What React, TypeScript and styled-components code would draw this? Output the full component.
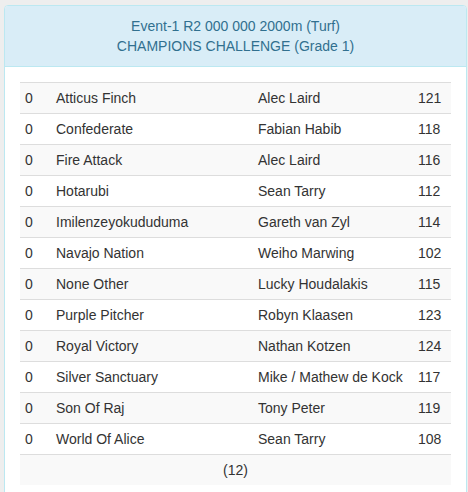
import React from "react";
import styled, { createGlobalStyle } from "styled-components";

const Global = createGlobalStyle`
  html, body { margin: 0; padding: 0; background: #eeeeee; }
  body {
    font-family: "Liberation Sans", Arial, Helvetica, sans-serif;
    font-size: 14px;
    line-height: 20px;
    color: #333333;
  }
  * { box-sizing: border-box; }
`;

const Page = styled.div`
  padding: 5px 1px 0 4px;
`;

const Panel = styled.div`
  background: #ffffff;
  border: 1px solid #bce8f1;
  border-radius: 4px;
`;

const Heading = styled.div`
  background: #d9edf7;
  color: #31708f;
  border-bottom: 1px solid #bce8f1;
  border-top-left-radius: 3px;
  border-top-right-radius: 3px;
  padding: 10px 15px;
  text-align: center;
`;

const Body = styled.div`
  padding: 15px;
`;

const Table = styled.table`
  width: 100%;
  border-collapse: collapse;
  border-spacing: 0;
  table-layout: fixed;
`;

const Row = styled.tr<{ $striped: boolean }>`
  background: ${(p) => (p.$striped ? "#f9f9f9" : "transparent")};
`;

const Cell = styled.td<{ $center?: boolean }>`
  padding: 5px;
  line-height: 20px;
  border-top: 1px solid #dddddd;
  vertical-align: top;
  white-space: nowrap;
  text-align: ${(p) => (p.$center ? "center" : "left")};
`;

const runners: [string, string, string, number][] = [
  ["0", "Atticus Finch", "Alec Laird", 121],
  ["0", "Confederate", "Fabian Habib", 118],
  ["0", "Fire Attack", "Alec Laird", 116],
  ["0", "Hotarubi", "Sean Tarry", 112],
  ["0", "Imilenzeyokududuma", "Gareth van Zyl", 114],
  ["0", "Navajo Nation", "Weiho Marwing", 102],
  ["0", "None Other", "Lucky Houdalakis", 115],
  ["0", "Purple Pitcher", "Robyn Klaasen", 123],
  ["0", "Royal Victory", "Nathan Kotzen", 124],
  ["0", "Silver Sanctuary", "Mike / Mathew de Kock", 117],
  ["0", "Son Of Raj", "Tony Peter", 119],
  ["0", "World Of Alice", "Sean Tarry", 108],
];

export default function App() {
  return (
    <Page>
      <Global />
      <Panel>
        <Heading>
          Event-1 R2 000 000 2000m (Turf)
          <br />
          CHAMPIONS CHALLENGE (Grade 1)
        </Heading>
        <Body>
          <Table>
            <colgroup>
              <col style={{ width: 31 }} />
              <col style={{ width: 202 }} />
              <col style={{ width: 160 }} />
              <col style={{ width: 38 }} />
            </colgroup>
            <tbody>
              {runners.map((r, i) => (
                <Row key={r[1]} $striped={i % 2 === 0}>
                  <Cell>{r[0]}</Cell>
                  <Cell>{r[1]}</Cell>
                  <Cell>{r[2]}</Cell>
                  <Cell>{r[3]}</Cell>
                </Row>
              ))}
              <Row $striped={true}>
                <Cell colSpan={4} $center>
                  (12)
                </Cell>
              </Row>
            </tbody>
          </Table>
        </Body>
      </Panel>
    </Page>
  );
}
